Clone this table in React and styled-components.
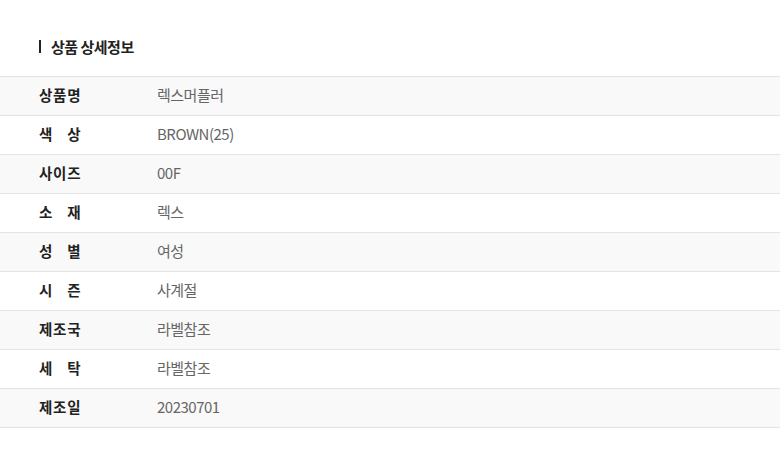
import React from "react";
import styled, { createGlobalStyle } from "styled-components";

const rows = [
  { label: "상품명", value: "렉스머플러" },
  { label: "색상", value: "BROWN(25)" },
  { label: "사이즈", value: "00F" },
  { label: "소재", value: "렉스" },
  { label: "성별", value: "여성" },
  { label: "시즌", value: "사계절" },
  { label: "제조국", value: "라벨참조" },
  { label: "세탁", value: "라벨참조" },
  { label: "제조일", value: "20230701" },
];

function App() {
  return (
    <>
      <GlobalStyle />
      <Wrapper>
        <Title>상품 상세정보</Title>
        <Table>
          {rows.map((row, i) => (
            <Row key={row.label} $striped={i % 2 === 0}>
              <Label>
                {row.label.split("").map((ch, j) => (
                  <span key={j}>{ch}</span>
                ))}
              </Label>
              <Value>{row.value}</Value>
            </Row>
          ))}
        </Table>
      </Wrapper>
    </>
  );
}

const GlobalStyle = createGlobalStyle`
  body {
    margin: 0;
    background: #fff;
    font-family: "Noto Sans CJK KR", "Noto Sans", sans-serif;
  }
`;

const Wrapper = styled.section`
  width: 780px;
`;

const Title = styled.h2`
  display: flex;
  align-items: center;
  gap: 10px;
  margin: 0;
  height: 76px;
  padding: 16px 0 0 39px;
  box-sizing: border-box;
  font-size: 15px;
  font-weight: 700;
  color: #222;
  letter-spacing: -0.5px;

  &::before {
    content: "";
    width: 2px;
    height: 13px;
    background: #222;
  }
`;

const Table = styled.div`
  border-top: 1px solid #e3e3e3;
`;

const Row = styled.div`
  display: flex;
  align-items: center;
  height: 35px;
  padding: 0 0 3px 39px;
  border-bottom: 1px solid #e3e3e3;
  background: ${(p) => (p.$striped ? "#f9f9f9" : "#fff")};
`;

const Label = styled.div`
  display: flex;
  justify-content: space-between;
  flex: 0 0 41px;
  margin-right: 77px;
  font-size: 14.5px;
  font-weight: 700;
  color: #222;
  letter-spacing: -0.5px;
  white-space: nowrap;
`;

const Value = styled.div`
  font-size: 15px;
  font-weight: 400;
  color: #666;
  letter-spacing: -0.5px;
`;

export default App;
